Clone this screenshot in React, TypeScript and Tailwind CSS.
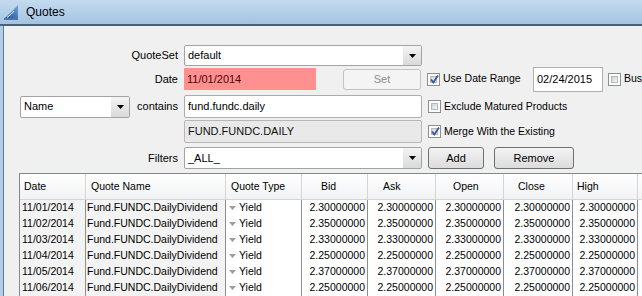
import React from 'react';

const font = { fontFamily: '"Liberation Sans", Arial, sans-serif' };

function Arrow({ color = '#000' }: { color?: string }) {
  return (
    <svg width="7" height="4" viewBox="0 0 7 4">
      <path d="M0 0 L7 0 L3.5 4 Z" fill={color} />
    </svg>
  );
}

function Check({ checked }: { checked?: boolean }) {
  return (
    <div className="w-[13px] h-[13px] border border-[#8e8f8f] bg-white p-[2px] shrink-0">
      <div className="w-full h-full bg-gradient-to-br from-[#cfd2d6] to-[#f6f6f6] border border-[#b6b8ba] relative">
        {checked && (
          <svg className="absolute -left-[2px] -top-[3px]" width="11" height="11" viewBox="0 0 11 11">
            <path d="M2 5.5 L4.3 8.5 L9 1.5" fill="none" stroke="#34569a" strokeWidth="1.8" />
          </svg>
        )}
      </div>
    </div>
  );
}

function Combo({ value, w, h }: { value: string; w: string; h: string }) {
  return (
    <div className={`${w} ${h} flex items-stretch border border-[#a3a3a3] rounded-[2px] bg-white shrink-0`}>
      <div className="flex-1 flex items-center pl-[3px] text-[11px] text-black">{value}</div>
      <div className="w-[18px] flex items-center justify-center bg-gradient-to-b from-[#f4f4f4] to-[#d9d9d9]">
        <Arrow />
      </div>
    </div>
  );
}

function CheckLabel({ checked, text }: { checked?: boolean; text: string }) {
  return (
    <div className="flex items-center">
      <Check checked={checked} />
      <span className="ml-[3px] text-[10.5px] text-black whitespace-nowrap">{text}</span>
    </div>
  );
}

const cols = [
  { name: 'Date', pl: 'pl-[4px]' },
  { name: 'Quote Name', pl: 'pl-[5px]' },
  { name: 'Quote Type', pl: 'pl-[5px]' },
  { name: 'Bid', pl: 'pl-[19px]' },
  { name: 'Ask', pl: 'pl-[15px]' },
  { name: 'Open', pl: 'pl-[17px]' },
  { name: 'Close', pl: 'pl-[14px]' },
  { name: 'High', pl: 'pl-[4px]' },
  { name: 'Low', pl: 'pl-[10px]' },
];

const rows = [
  ['11/01/2014', '2.30000000'],
  ['11/02/2014', '2.35000000'],
  ['11/03/2014', '2.33000000'],
  ['11/04/2014', '2.25000000'],
  ['11/05/2014', '2.37000000'],
  ['11/06/2014', '2.25000000'],
];

const grid = 'grid grid-cols-[66px_140px_76px_66px_68px_68px_69px_65px_80px]';

export default function App() {
  return (
    <div className="w-[642px] h-[296px] overflow-hidden bg-[#f0f0f0] flex flex-col" style={font}>
      {/* title bar */}
      <div className="h-[26px] shrink-0 flex items-center bg-gradient-to-b from-[#c4daee] via-[#b3d0ea] to-[#a4c3e0] border-b-2 border-[#4b617a]">
        <svg className="ml-[4px]" width="15" height="16" viewBox="0 0 15 16">
          <defs>
            <linearGradient id="sail" x1="0" y1="1" x2="1" y2="0">
              <stop offset="0" stopColor="#1f4f9a" />
              <stop offset="1" stopColor="#6aa6e0" />
            </linearGradient>
          </defs>
          <path d="M1 14 Q7 9 14 1 L14 14 Z" fill="url(#sail)" />
          <path d="M3 13.5 Q8 10 10 7" stroke="#e8f2fb" strokeWidth="1" fill="none" />
          <path d="M0 15 L14 15" stroke="#173d7a" strokeWidth="1.2" />
        </svg>
        <span className="ml-[7px] text-[12px] text-black">Quotes</span>
      </div>

      <div className="flex flex-1 min-h-0">
        {/* window frame */}
        <div className="w-[3px] shrink-0 bg-[#b3cde6]" />
        <div className="w-[1px] shrink-0 bg-[#5f7894]" />

        <div className="flex-1 min-w-0 overflow-hidden flex flex-col pt-[19px]">
          {/* QuoteSet */}
          <div className="h-[21px] flex items-center">
            <div className="w-[180px] shrink-0 text-right pr-[6px] text-[11px]">QuoteSet</div>
            <Combo value="default" w="w-[238px]" h="h-[21px]" />
          </div>

          {/* Date */}
          <div className="mt-[1px] h-[24px] flex items-center">
            <div className="w-[180px] shrink-0 text-right pr-[6px] text-[11px]">Date</div>
            <div className="w-[132px] h-[22px] shrink-0 bg-[#ff9090] flex items-center pl-[3px] text-[11px] text-[#4a0505]">
              11/01/2014
            </div>
            <div className="ml-[27px] w-[78px] h-[21px] shrink-0 border border-[#c3c3c3] rounded-[3px] bg-[#f4f4f4] flex items-center justify-center text-[11px] text-[#8d8d8d]">
              Set
            </div>
            <div className="ml-[6px] w-[106px] shrink-0">
              <CheckLabel checked text="Use Date Range" />
            </div>
            <div className="w-[70px] h-[25px] shrink-0 border border-[#b0b0b0] bg-white flex items-center pl-[3px] text-[11px]">
              02/24/2015
            </div>
            <div className="ml-[5px] shrink-0">
              <CheckLabel text="Business Days" />
            </div>
          </div>

          {/* contains */}
          <div className="mt-[4px] h-[23px] flex items-center">
            <div className="w-[180px] shrink-0 flex items-center">
              <div className="ml-[16px]">
                <Combo value="Name" w="w-[110px]" h="h-[22px]" />
              </div>
              <div className="flex-1 text-right pr-[6px] text-[11px]">contains</div>
            </div>
            <div className="w-[238px] h-[23px] shrink-0 border border-[#acacac] rounded-[2px] bg-white flex items-center pl-[3px] text-[11px]">
              fund.fundc.daily
            </div>
            <div className="ml-[6px]">
              <CheckLabel text="Exclude Matured Products" />
            </div>
          </div>

          {/* resolved */}
          <div className="mt-[2px] h-[23px] flex items-center">
            <div className="w-[180px] shrink-0" />
            <div className="w-[238px] h-[23px] shrink-0 border border-[#b7b7b7] rounded-[2px] bg-[#e9e9e9] flex items-center pl-[3px] text-[11px] text-[#111]">
              FUND.FUNDC.DAILY
            </div>
            <div className="ml-[6px]">
              <CheckLabel checked text="Merge With the Existing" />
            </div>
          </div>

          {/* Filters */}
          <div className="mt-[4px] h-[22px] flex items-center">
            <div className="w-[180px] shrink-0 text-right pr-[6px] text-[11px]">Filters</div>
            <Combo value="_ALL_" w="w-[238px]" h="h-[22px]" />
            <div className="ml-[6px] w-[56px] h-[22px] shrink-0 border border-[#707070] rounded-[3px] bg-gradient-to-b from-[#f3f3f3] to-[#dcdcdc] flex items-center justify-center text-[11px]">
              Add
            </div>
            <div className="ml-[10px] w-[80px] h-[22px] shrink-0 border border-[#707070] rounded-[3px] bg-gradient-to-b from-[#f3f3f3] to-[#dcdcdc] flex items-center justify-center text-[11px]">
              Remove
            </div>
          </div>

          {/* table */}
          <div className="mt-[4px] ml-[15px] w-max border-l border-t border-[#828790] text-[10.5px] text-black">
            <div className={`${grid} h-[26px] bg-gradient-to-b from-[#ffffff] to-[#f1f2f4] border-b border-[#d5d5d5]`}>
              {cols.map((c) => (
                <div key={c.name} className={`flex items-center border-r border-[#d5d5d5] ${c.pl} whitespace-nowrap`}>
                  {c.name}
                </div>
              ))}
            </div>
            {rows.map(([d, v]) => (
              <div key={d} className={`${grid} h-[16px]`}>
                <div className="flex items-center pl-[2px] bg-[#f3f3f3] border-r border-b border-[#8e8e8e]">{d}</div>
                <div className="flex items-center pl-[1px] bg-[#f3f3f3] border-r border-b border-[#8e8e8e] whitespace-nowrap">
                  Fund.FUNDC.DailyDividend
                </div>
                <div className="flex items-center pl-[3px] bg-white border-r border-b border-[#8e8e8e]">
                  <Arrow color="#9c9c9c" />
                  <span className="ml-[3px]">Yield</span>
                </div>
                {[0, 1, 2, 3, 4, 5].map((i) => (
                  <div key={i} className="flex items-center justify-end pr-[2px] bg-white border-r border-b border-[#8e8e8e]">
                    {v}
                  </div>
                ))}
              </div>
            ))}
          </div>
        </div>
      </div>
    </div>
  );
}
